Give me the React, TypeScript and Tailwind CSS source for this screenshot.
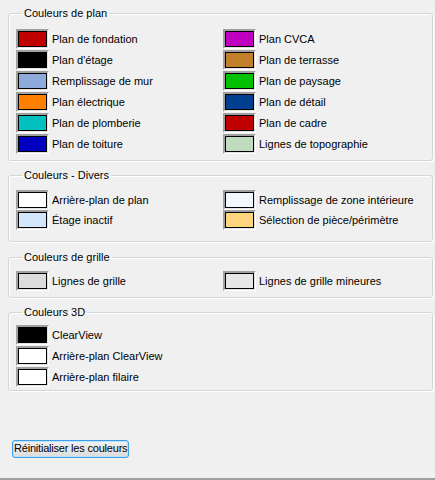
import React from 'react';

type Item = { label: string; color: string; nudge?: string };

type Group = {
  title: string;
  left: Item[];
  right: Item[];
  box: string; // margin + padding of the fieldset
  rows: string; // gap between rows
};

const groups: Group[] = [
  {
    title: 'Couleurs de plan',
    box: 'mt-[7px] pt-[9px] pb-[6px]',
    rows: 'gap-[1px]',
    left: [
      { label: 'Plan de fondation', color: '#c00000' },
      { label: "Plan d'étage", color: '#000000' },
      { label: 'Remplissage de mur', color: '#8eaadb' },
      { label: 'Plan électrique', color: '#ff8000' },
      { label: 'Plan de plomberie', color: '#00c0c0' },
      { label: 'Plan de toiture', color: '#0000c0' },
    ],
    right: [
      { label: 'Plan CVCA', color: '#c000c0' },
      { label: 'Plan de terrasse', color: '#c27f2b' },
      { label: 'Plan de paysage', color: '#00c000' },
      { label: 'Plan de détail', color: '#00408f' },
      { label: 'Plan de cadre', color: '#c00000' },
      { label: 'Lignes de topographie', color: '#c0dcc0' },
    ],
  },
  {
    title: 'Couleurs - Divers',
    box: 'mt-[8px] pt-[8px] pb-[11px]',
    rows: 'gap-0',
    left: [
      { label: 'Arrière-plan de plan', color: '#ffffff' },
      { label: 'Étage inactif', color: '#d2e6fc' },
    ],
    right: [
      { label: 'Remplissage de zone intérieure', color: '#f0f8ff', nudge: 'ml-[2px]' },
      { label: 'Sélection de pièce/périmètre', color: '#ffd47f', nudge: 'ml-[2px]' },
    ],
  },
  {
    title: 'Couleurs de grille',
    box: 'mt-[9px] pt-[7px] pb-[6px]',
    rows: 'gap-0',
    left: [{ label: 'Lignes de grille', color: '#dcdcdc' }],
    right: [{ label: 'Lignes de grille mineures', color: '#e6e6e6', nudge: 'ml-[2px]' }],
  },
  {
    title: 'Couleurs 3D',
    box: 'mt-[8px] pt-[6px] pb-[3px]',
    rows: 'gap-[1px]',
    left: [
      { label: 'ClearView', color: '#000000' },
      { label: 'Arrière-plan ClearView', color: '#ffffff' },
      { label: 'Arrière-plan filaire', color: '#ffffff', nudge: 'ml-[2px]' },
    ],
    right: [],
  },
];

function Swatch({ color }: { color: string }) {
  return (
    <div className="w-[33px] h-[20px] shrink-0 border border-t-[#a0a0a0] border-l-[#a0a0a0] border-b-white border-r-white">
      <div className="h-full w-full border border-t-[#a0a0a0] border-l-[#a0a0a0] border-b-[#e3e3e3] border-r-[#e3e3e3]">
        <div className="h-full w-full border border-black" style={{ backgroundColor: color }} />
      </div>
    </div>
  );
}

function Row({ item }: { item: Item }) {
  return (
    <div className="flex items-center h-[20px]">
      <Swatch color={item.color} />
      <span className={`ml-[3px] text-[11px] leading-[13px] text-black whitespace-nowrap ${item.nudge ?? ''}`}>
        {item.label}
      </span>
    </div>
  );
}

export default function App() {
  return (
    <div className="w-[435px] h-[480px] bg-[#f0f0f0] font-['Liberation_Sans',Arial,sans-serif] flex flex-col overflow-hidden">
      <div className="pl-[8px] pr-[2px]">
        {groups.map((g) => (
          <fieldset
            key={g.title}
            className={`border border-[#d5d5d5] rounded-[3px] shadow-[inset_1px_1px_0_#fff,1px_1px_0_#fff] pl-[7px] ${g.box}`}
          >
            <legend className="ml-[6px] px-[2px] text-[11px] leading-[13px] font-normal text-black">{g.title}</legend>
            <div className="grid grid-cols-[207px_1fr]">
              <div className={`flex flex-col ${g.rows}`}>
                {g.left.map((it) => (
                  <Row key={it.label} item={it} />
                ))}
              </div>
              <div className={`flex flex-col ${g.rows}`}>
                {g.right.map((it) => (
                  <Row key={it.label} item={it} />
                ))}
              </div>
            </div>
          </fieldset>
        ))}
      </div>

      <div className="flex-1" />

      <div className="pl-[12px] pb-[19px]">
        <button className="h-[18px] px-[1px] rounded-[3px] border border-[#3c9ee6] bg-gradient-to-b from-[#f2f2f2] to-[#dcdcdc] shadow-[inset_0_0_0_1px_#b9e3fb] text-[11px] leading-[13px] tracking-[-0.2px] text-black">
          Réinitialiser les couleurs
        </button>
      </div>
      <div className="h-[1px] bg-[#a0a0a0]" />
      <div className="h-[1px] bg-[#a0a0a0]" />
    </div>
  );
}
